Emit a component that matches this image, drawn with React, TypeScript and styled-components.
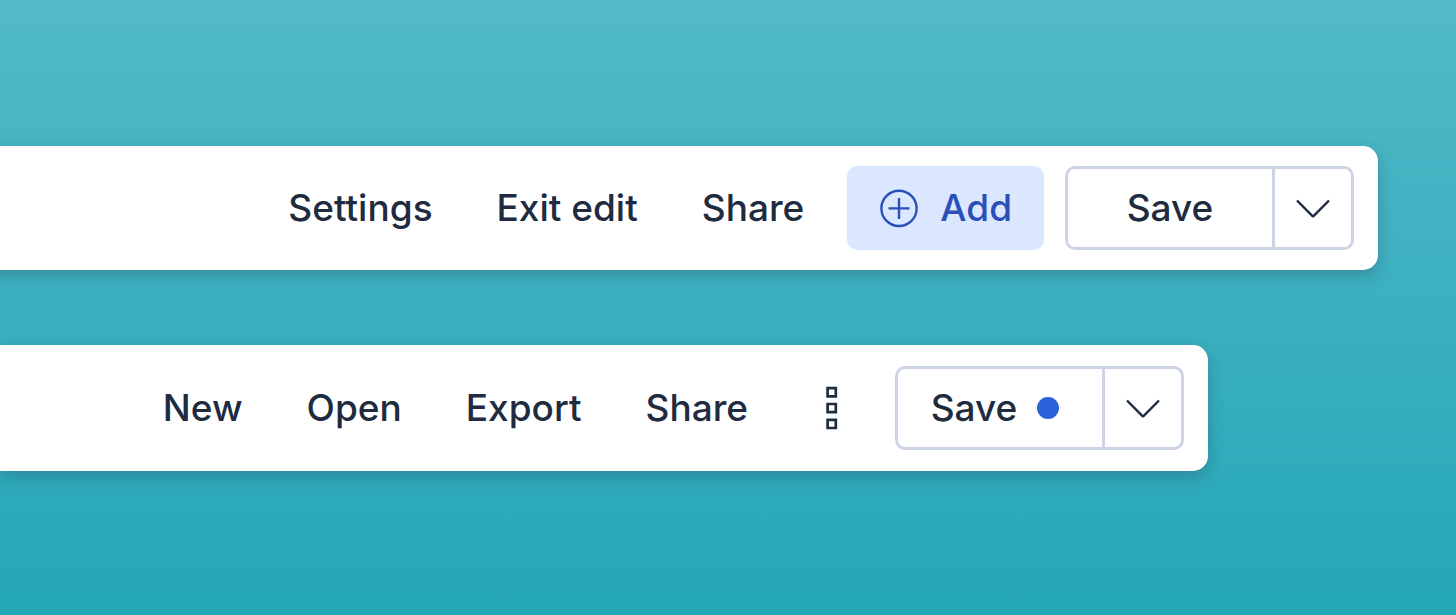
import React from 'react';
import styled, { createGlobalStyle } from 'styled-components';

const GlobalStyle = createGlobalStyle`
  * { box-sizing: border-box; }
  body {
    margin: 0;
    font-family: Inter, "Liberation Sans", sans-serif;
    -webkit-font-smoothing: antialiased;
  }
`;

const Page = styled.main`
  display: flex;
  flex-direction: column;
  min-height: 100vh;
  padding: 146px 78px 72px 0;
  gap: 75px;
  overflow: hidden;
  background: linear-gradient(180deg, #52b9c8 0%, #24a7b7 100%);
`;

const Toolbar = styled.nav<{ $inset?: boolean }>`
  display: flex;
  align-items: center;
  justify-content: flex-end;
  margin-left: ${(p) => (p.$inset ? '0' : '-24px')};
  margin-right: ${(p) => (p.$inset ? '170px' : '0')};
  padding: ${(p) => (p.$inset ? '21px' : '20px')} 24px;
  background: #fff;
  border-radius: 0 15px 15px 0;
  box-shadow: 0 6px 16px rgba(40, 60, 80, 0.3);
`;

const buttonText = `
  font-family: inherit;
  font-size: 37px;
  font-weight: 500;
  font-optical-sizing: none;
  line-height: 48px;
  color: #202b40;
  white-space: nowrap;
  cursor: pointer;
`;

const TextButton = styled.button`
  ${buttonText}
  padding: 0 32px;
  border: 0;
  background: transparent;
`;

const AddButton = styled.button`
  ${buttonText}
  display: flex;
  align-items: center;
  gap: 21px;
  height: 84px;
  margin: 0 21px 0 11px;
  padding: 0 32px;
  border: 0;
  border-radius: 10px;
  background: #dbe7ff;
  color: #2850b8;
`;

const IconButton = styled.button`
  display: flex;
  align-items: center;
  justify-content: center;
  width: 84px;
  height: 84px;
  margin: 0 21px 0 10px;
  padding: 0;
  border: 0;
  background: transparent;
  color: #202b40;
  cursor: pointer;
`;

const SplitButton = styled.div`
  display: flex;
  width: 289px;
  height: 84px;
  border: 3px solid #cdd4e5;
  border-radius: 10px;
`;

const SaveButton = styled.button<{ $unsaved: boolean }>`
  ${buttonText}
  display: flex;
  flex: 1;
  align-items: center;
  justify-content: center;
  gap: 20px;
  padding: 0 ${(p) => (p.$unsaved ? '10px' : '0')} 0 0;
  border: 0;
  background: transparent;
`;

const MenuButton = styled.button`
  display: flex;
  align-items: center;
  justify-content: center;
  width: 79px;
  padding: 0;
  border: 0;
  border-left: 3px solid #cdd4e5;
  background: transparent;
  color: #202b40;
  cursor: pointer;
`;

const UnsavedDot = styled.span`
  width: 22px;
  height: 22px;
  border-radius: 50%;
  background: #2a62d9;
`;

const PlusCircle = () => (
  <svg width="40" height="40" viewBox="0 0 40 40" fill="none" stroke="currentColor" strokeWidth="2.4" aria-hidden="true">
    <circle cx="20" cy="20.400" r="17.6" />
    <path d="M20 9.900V30.900M9.500 20.400H30.500" />
  </svg>
);

const Chevron = () => (
  <svg width="36" height="24" viewBox="0 0 36 24" fill="none" stroke="currentColor" strokeWidth="2.4" aria-hidden="true">
    <path d="M2 4.500L17.500 20Q18 20.400 18.500 20L34 4.500" />
  </svg>
);

const Boxes = () => (
  <svg width="12" height="44" viewBox="0 0 12 44" fill="none" stroke="currentColor" strokeWidth="2.7" aria-hidden="true">
    <path d="M1.600 2.200h8.200v8.200h-8.200zM1.600 18h8.200v8.200h-8.200zM1.600 33.800h8.200v8.200h-8.200z" />
  </svg>
);

const SaveSplit = ({ unsaved = false }: { unsaved?: boolean }) => (
  <SplitButton>
    <SaveButton type="button" $unsaved={unsaved}>
      Save
      {unsaved && <UnsavedDot />}
    </SaveButton>
    <MenuButton type="button" aria-label="More save options">
      <Chevron />
    </MenuButton>
  </SplitButton>
);

export default function App() {
  return (
    <>
      <GlobalStyle />
      <Page>
        <Toolbar>
          {['Settings', 'Exit edit', 'Share'].map((label) => (
            <TextButton type="button" key={label}>{label}</TextButton>
          ))}
          <AddButton type="button">
            <PlusCircle />
            Add
          </AddButton>
          <SaveSplit />
        </Toolbar>
        <Toolbar $inset>
          {['New', 'Open', 'Export', 'Share'].map((label) => (
            <TextButton type="button" key={label}>{label}</TextButton>
          ))}
          <IconButton type="button" aria-label="More actions">
            <Boxes />
          </IconButton>
          <SaveSplit unsaved />
        </Toolbar>
      </Page>
    </>
  );
}
